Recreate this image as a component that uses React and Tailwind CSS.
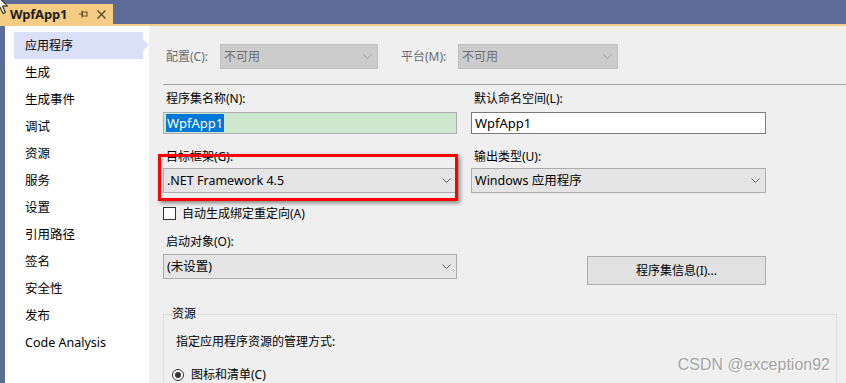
import React from "react";

const FONT = { fontFamily: '"Noto Sans", "Noto Sans CJK SC", sans-serif' };

function Chevron() {
  return (
    <svg width="9" height="5" viewBox="0 0 9 5" className="shrink-0">
      <path d="M0.5 0.5 L4.5 4.5 L8.5 0.5" fill="none" stroke="#606060" strokeWidth="1" />
    </svg>
  );
}

function DisabledSelect({ text, className }) {
  return (
    <div className={`flex items-center justify-between border border-[#bfbfbf] bg-[#cccccc] text-[#6d6d6d] pl-[3px] pr-[5px] ${className}`}>
      <span className="leading-[16px]">{text}</span>
      <svg width="9" height="5" viewBox="0 0 9 5" className="shrink-0">
        <path d="M0.5 0.5 L4.5 4.5 L8.5 0.5" fill="none" stroke="#9a9a9a" strokeWidth="1" />
      </svg>
    </div>
  );
}

function Select({ text, className }) {
  return (
    <div className={`flex items-center justify-between border border-[#acacac] bg-[#e5e5e5] text-black pl-[3px] pr-[5px] ${className}`}>
      <span className="leading-[16px] text-[12.5px]">{text}</span>
      <Chevron />
    </div>
  );
}

function Label({ children, className = "" }) {
  return <div className={`h-[16px] leading-[16px] pl-[3px] text-black ${className}`}>{children}</div>;
}

const navItems = ["生成", "生成事件", "调试", "资源", "服务", "设置", "引用路径", "签名", "安全性", "发布", "Code Analysis"];

export default function App() {
  return (
    <div className="relative w-[846px] h-[383px] overflow-hidden bg-[#efefef] text-[12px]" style={FONT}>
      {/* Title / tab bar */}
      <div className="h-[24px] bg-[#5d6b99] flex items-end">
        <div className="h-[20px] w-[113px] bg-[#f5cc84] flex items-center pl-[10px]">
          <span className="font-bold text-[13px] leading-[16px] text-[#1e1e1e] tracking-[-0.2px]">WpfApp1</span>
          <svg width="9" height="8" viewBox="0 0 9 8" className="ml-[12px]">
            <path d="M0 4 H3 M3 0.5 V7.5" stroke="#5a4a28" strokeWidth="1" fill="none" />
            <rect x="3.5" y="2" width="4.5" height="4" stroke="#5a4a28" strokeWidth="1" fill="none" />
          </svg>
          <svg width="9" height="9" viewBox="0 0 9 9" className="ml-[9px]">
            <path d="M0.5 0.5 L8.5 8.5 M8.5 0.5 L0.5 8.5" stroke="#5a4a28" strokeWidth="1.3" fill="none" />
          </svg>
        </div>
      </div>
      <div className="h-[2px] bg-[#f5cc84]" />

      <div className="flex h-[357px]">
        <div className="w-[5px] bg-[#5d6b99]" />
        {/* Sidebar */}
        <div className="w-[144px] bg-white pt-[6px]">
          <div className="relative ml-[9px] w-[129px] h-[27px] bg-[#dae0f7] flex items-center pl-[11px] text-black">
            <span className="leading-[16px]">应用程序</span>
            <div className="absolute right-[-6px] top-[7px] w-0 h-0 border-y-[6px] border-y-transparent border-l-[6px] border-l-[#dae0f7]" />
          </div>
          {navItems.map((t) => (
            <div key={t} className="h-[27px] flex items-center pl-[20px] text-black">
              <span className="leading-[16px] text-[12.5px]">{t}</span>
            </div>
          ))}
        </div>

        {/* Content */}
        <div className="flex-1 bg-[#efefef]">
          <div className="pl-[14px] pt-[18px] flex items-center h-[43px]">
            <span className="w-[57px] pl-[3px] text-[#6d6d6d] leading-[16px]">配置(C):</span>
            <DisabledSelect text="不可用" className="w-[158px] h-[25px]" />
            <span className="ml-[23px] w-[57px] text-[#6d6d6d] leading-[16px]">平台(M):</span>
            <DisabledSelect text="不可用" className="w-[160px] h-[25px]" />
          </div>
          <div className="ml-[14px] mt-[15px] h-px bg-[#a0a0a0]" />

          <div className="pl-[14px] flex gap-[14px]">
            {/* left column */}
            <div className="w-[294px] flex flex-col">
              <Label className="mt-[6px]">程序集名称(N):</Label>
              <div className="mt-[5px] h-[22px] border border-[#abadb3] bg-[#cde8cf] flex items-center pl-[2px]">
                <span className="bg-[#0078d7] text-white text-[13px] leading-[18px] px-px">WpfApp1</span>
              </div>
              <Label className="mt-[15px]">目标框架(G):</Label>
              <Select text=".NET Framework 4.5" className="mt-[3px] h-[25px]" />
              <div className="mt-[14px] h-[13px] flex items-center">
                <div className="w-[13px] h-[13px] border border-[#333333] bg-white" />
                <span className="ml-[6px] leading-[16px]">自动生成绑定重定向(A)</span>
              </div>
              <Label className="mt-[14px]">启动对象(O):</Label>
              <Select text="(未设置)" className="mt-[4px] h-[25px]" />
            </div>
            {/* right column */}
            <div className="w-[295px] flex flex-col">
              <Label className="mt-[6px]">默认命名空间(L):</Label>
              <div className="mt-[5px] h-[22px] border border-[#7a7a7a] bg-white flex items-center pl-[3px]">
                <span className="text-[13px] leading-[18px]">WpfApp1</span>
              </div>
              <Label className="mt-[15px]">输出类型(U):</Label>
              <Select text="Windows 应用程序" className="mt-[3px] h-[25px]" />
              <div className="mt-[63px] ml-[116px] w-[179px] h-[29px] border border-[#adadad] bg-[#e1e1e1] flex items-center justify-center">
                <span className="leading-[16px]">程序集信息(I)...</span>
              </div>
            </div>
          </div>

          <fieldset className="ml-[14px] mr-[9px] mt-[21px] border border-[#dcdcdc] h-[120px]">
            <legend className="ml-[7px] px-px leading-[16px]">资源</legend>
            <div className="mt-[12px] pl-[12px] leading-[16px]">指定应用程序资源的管理方式:</div>
            <div className="mt-[17px] pl-[8px] flex items-center">
              <div className="w-[12px] h-[12px] rounded-full border border-[#333333] bg-white flex items-center justify-center">
                <div className="w-[6px] h-[6px] rounded-full bg-[#333333]" />
              </div>
              <span className="ml-[7px] leading-[16px]">图标和清单(C)</span>
            </div>
          </fieldset>
        </div>
      </div>

      {/* red annotation rectangle */}
      <div className="absolute left-[158px] top-[154px] w-[300px] h-[47px] border-[3px] border-[#ff0000] shadow-[2px_2px_4px_rgba(0,0,0,0.45)]" />

      {/* watermark */}
      <div
        className="absolute right-[16px] top-[356px] text-[16px] leading-[18px] text-[#a3a3a3] [text-shadow:1px_1px_0_#ffffff]"
        style={{ fontFamily: '"Liberation Sans", Arial, sans-serif' }}
      >
        CSDN @exception92
      </div>

      {/* mouse cursor */}
      <svg className="absolute left-[-5px] top-[-6px]" width="14" height="21" viewBox="0 0 14 21">
        <path d="M1 1 L1 17 L5 13 L8 19.5 L10.5 18.5 L7.5 12 L12.5 12 Z" fill="white" stroke="black" strokeWidth="1" />
      </svg>
    </div>
  );
}
